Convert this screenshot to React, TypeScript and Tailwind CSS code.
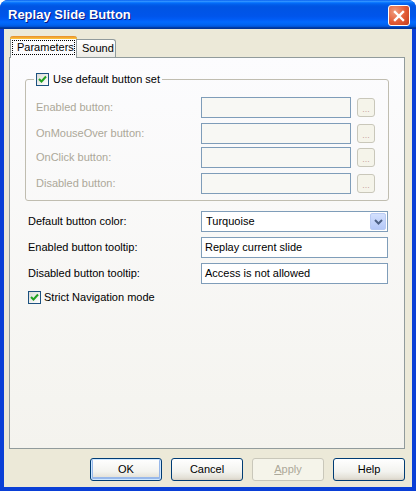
import React from 'react';

const font = "font-['Liberation_Sans',Arial,sans-serif]";

const CheckBox: React.FC = () => (
    <span className="w-[13px] h-[13px] shrink-0 border border-[#1c5180] bg-[linear-gradient(135deg,#dcdcd7_0%,#ffffff_100%)] flex items-center justify-center">
        <svg width="9" height="9" viewBox="0 0 9 9">
            <path d="M1 4 L3.5 6.5 L8 1.5" fill="none" stroke="#21a121" strokeWidth="2" />
        </svg>
    </span>
);

const GroupRow: React.FC<{ label: string; className?: string }> = ({ label, className }) => (
    <div className={`flex items-center h-[21px] ${className ?? ''}`}>
        <span className="w-[165px] text-[#aca899]">{label}</span>
        <div className="w-[150px] h-[21px] border border-[#7f9db9] bg-[#f8f8f4]" />
        <div className="ml-[6px] w-[18px] h-[19px] border border-[#c9c7ba] rounded-[3px] bg-[#f5f4ea] flex items-end justify-center pb-[2px] text-[#c9a3a3] text-[9px] leading-none">
            ...
        </div>
    </div>
);

const FieldRow: React.FC<{ label: string; children: React.ReactNode; className?: string }> = ({ label, children, className }) => (
    <div className={`flex items-center h-[21px] ${className ?? ''}`}>
        <span className="w-[173px] text-black">{label}</span>
        {children}
    </div>
);

const DlgButton: React.FC<{ label: React.ReactNode; def?: boolean; disabled?: boolean }> = ({ label, def, disabled }) => (
    <div
        className={`w-[72px] h-[23px] rounded-[3px] border flex items-center justify-center ${
            disabled
                ? 'border-[#c9c7ba] bg-[#f5f4ea] text-[#aca899]'
                : 'border-[#003c74] bg-[linear-gradient(#ffffff_0%,#f3f3ef_60%,#e3e0d6_90%,#d6d0c5_100%)] text-black'
        } ${def ? 'shadow-[inset_0_0_0_1px_#cee7ff,inset_0_-1px_0_2px_#98b8ea]' : ''}`}
    >
        {label}
    </div>
);

export default function App() {
    return (
        <div className={`w-[416px] h-[491px] bg-white ${font} text-[11px] leading-[13px]`}>
            <div className="w-full h-full flex flex-col rounded-t-[8px] overflow-hidden bg-[#0a3fd6]">
                <div className="h-[29px] shrink-0 flex items-start justify-between bg-[linear-gradient(#0058ee_0%,#3593ff_4%,#288eff_6%,#127dff_8%,#036ffc_10%,#0262ee_14%,#0057e5_20%,#0054e3_24%,#0055eb_56%,#005bf5_66%,#026afe_76%,#0062ef_86%,#0052d6_92%,#0040ab_94%,#003092_100%)]">
                    <span className="ml-[8px] mt-[7px] text-white font-bold text-[13px] leading-[15px] [text-shadow:1px_1px_0_#0a1883]">
                        Replay Slide Button
                    </span>
                    <div className="mt-[5px] mr-[6px] w-[22px] h-[21px] rounded-[3px] border border-white bg-[radial-gradient(circle_at_30%_30%,#f09c7e_0%,#e25b35_55%,#c23c1b_100%)] flex items-center justify-center">
                        <svg width="12" height="12" viewBox="0 0 12 12">
                            <path d="M2 2 L10 10 M10 2 L2 10" stroke="white" strokeWidth="2.4" strokeLinecap="square" />
                        </svg>
                    </div>
                </div>

                <div className="flex-1 mx-[4px] mb-[4px] bg-[#ece9d8] flex flex-col pt-[7px] pl-[5px] pr-[7px]">
                    {/* tabs */}
                    <div className="flex items-end h-[21px] ml-[1px] relative z-10">
                        <div className="w-[67px] h-[22px] -mb-px bg-[#fcfcfe] border-x border-[#919b9c] rounded-t-[3px] flex flex-col">
                            <div className="h-[3px] -mx-px rounded-t-[3px] bg-[linear-gradient(#e68b2c,#ffc73c)]" />
                            <div className="mx-[1px] mt-[1px] h-[15px] border border-dotted border-black flex items-center pl-[4px]">
                                Parameters
                            </div>
                        </div>
                        <div className="w-[39px] h-[18px] border-t border-r border-[#919b9c] rounded-tr-[3px] bg-[linear-gradient(#ffffff,#ecebe6)] flex items-center pl-[5px]">
                            Sound
                        </div>
                    </div>

                    {/* panel */}
                    <div className="h-[392px] border border-[#919b9c] bg-[linear-gradient(#fcfcfe,#f4f3ee)] flex flex-col">
                        <fieldset className="mt-[14px] mx-[15px] border border-[#c0bdb0] rounded-[3px] pl-[10px] pr-[13px] pt-[10px] pb-[6px]">
                            <legend className="-ml-[2px] px-[2px]">
                                <span className="flex items-center gap-[4px] h-[15px] text-black">
                                    <CheckBox />
                                    Use default button set
                                </span>
                            </legend>
                            <GroupRow label="Enabled button:" />
                            <GroupRow label="OnMouseOver button:" className="mt-[5px]" />
                            <GroupRow label="OnClick button:" className="mt-[3px]" />
                            <GroupRow label="Disabled button:" className="mt-[5px]" />
                        </fieldset>

                        <div className="pl-[18px] pr-[16px] mt-[10px] flex flex-col gap-[5px]">
                            <FieldRow label="Default button color:">
                                <div className="flex-1 h-[21px] border border-[#7f9db9] bg-white flex items-center">
                                    <span className="pl-[4px] flex-1">Turquoise</span>
                                    <div className="w-[16px] h-[17px] mr-[1px] rounded-[2px] border border-[#b9cbf3] bg-[linear-gradient(#d3e0fd,#b4c8f8)] flex items-center justify-center">
                                        <svg width="9" height="6" viewBox="0 0 9 6">
                                            <path d="M1 1 L4.5 4.5 L8 1" fill="none" stroke="#4d6185" strokeWidth="2" />
                                        </svg>
                                    </div>
                                </div>
                            </FieldRow>
                            <FieldRow label="Enabled button tooltip:">
                                <div className="flex-1 h-[21px] border border-[#7f9db9] bg-white flex items-center pl-[3px]">
                                    Replay current slide
                                </div>
                            </FieldRow>
                            <FieldRow label="Disabled button tooltip:">
                                <div className="flex-1 h-[21px] border border-[#7f9db9] bg-white flex items-center pl-[3px]">
                                    Access is not allowed
                                </div>
                            </FieldRow>
                            <div className="flex items-center gap-[3px] mt-[1px] h-[14px]">
                                <CheckBox />
                                Strict Navigation mode
                            </div>
                        </div>
                    </div>

                    {/* buttons */}
                    <div className="mt-[9px] flex justify-end gap-[9px]">
                        <DlgButton label="OK" def />
                        <DlgButton label="Cancel" />
                        <DlgButton label={<span><span className="underline">A</span>pply</span>} disabled />
                        <DlgButton label="Help" />
                    </div>
                </div>
            </div>
        </div>
    );
}
